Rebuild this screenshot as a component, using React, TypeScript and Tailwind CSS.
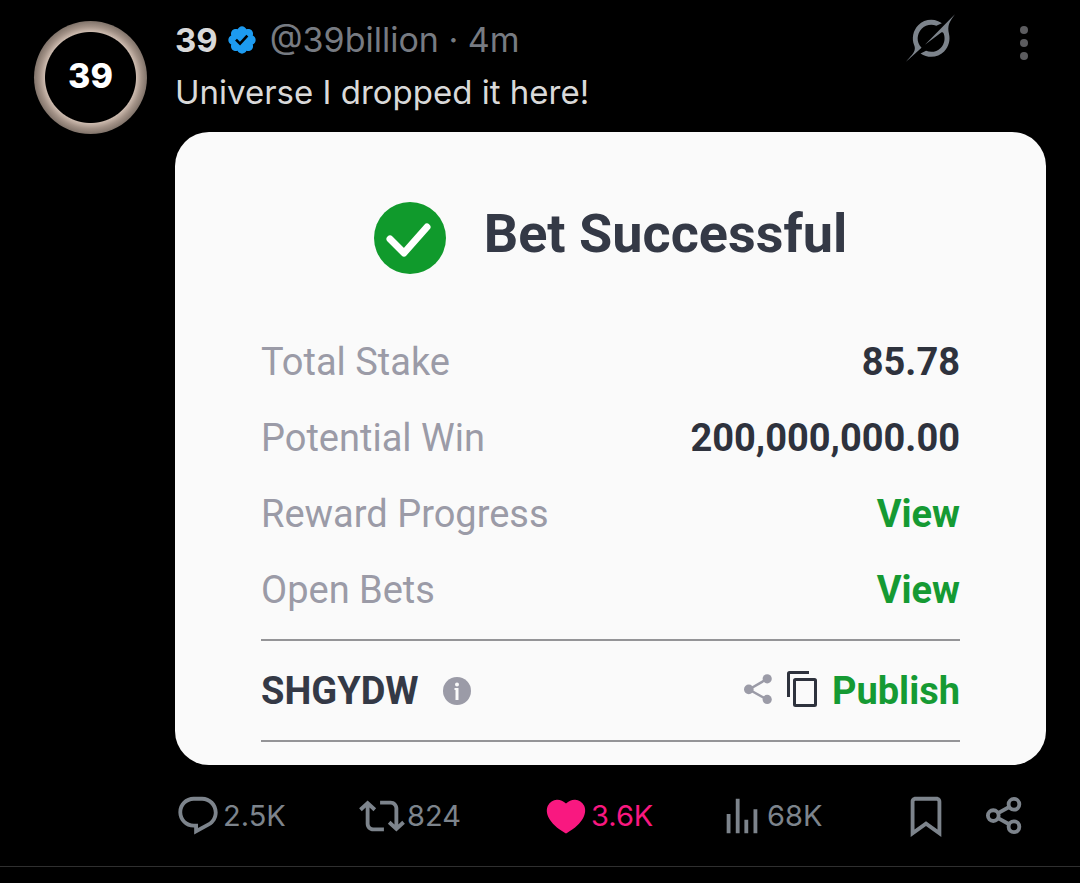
import React from 'react';

interface IconProps {
  className?: string;
}

const CommentIcon: React.FC<IconProps> = ({ className }) => (
  <svg viewBox="0 0 24 24" fill="currentColor" className={className} aria-hidden="true">
    <path d="M1.751 10c0-4.42 3.584-8 8.005-8h4.366c4.49 0 8.129 3.64 8.129 8.13 0 2.96-1.607 5.68-4.196 7.11l-8.054 4.46v-3.69h-.067c-4.49.1-8.183-3.51-8.183-8.01zm8.005-6c-3.317 0-6.005 2.69-6.005 6 0 3.37 2.77 6.08 6.138 6.01l.351-.01h1.761v2.3l5.087-2.81c1.951-1.08 3.163-3.13 3.163-5.36 0-3.39-2.744-6.13-6.129-6.13H9.756z" />
  </svg>
);

const RepostIcon: React.FC<IconProps> = ({ className }) => (
  <svg viewBox="0 0 24 24" fill="currentColor" className={className} aria-hidden="true">
    <path d="M4.5 3.88l4.432 4.14-1.364 1.46L5.5 7.55V16c0 1.1.896 2 2 2H13v2H7.5c-2.209 0-4-1.79-4-4V7.55L1.432 9.48.068 8.02 4.5 3.88zM16.5 6H11V4h5.5c2.209 0 4 1.79 4 4v8.45l2.068-1.93 1.364 1.46-4.432 4.14-4.432-4.14 1.364-1.46 2.068 1.93V8c0-1.1-.896-2-2-2z" />
  </svg>
);

const HeartIcon: React.FC<IconProps> = ({ className }) => (
  <svg viewBox="0 0 24 24" fill="currentColor" className={className} aria-hidden="true">
    <path d="M20.884 13.19c-1.351 2.48-4.001 5.12-8.379 7.67l-.503.3-.504-.3c-4.379-2.55-7.029-5.19-8.382-7.67-1.36-2.5-1.41-4.86-.514-6.67.887-1.79 2.647-2.91 4.601-3.01 1.651-.09 3.368.56 4.798 2.01 1.429-1.45 3.146-2.1 4.796-2.01 1.954.1 3.714 1.22 4.601 3.01.896 1.81.846 4.17-.514 6.67z" />
  </svg>
);

const ViewsIcon: React.FC<IconProps> = ({ className }) => (
  <svg viewBox="0 0 24 24" fill="currentColor" className={className} aria-hidden="true">
    <path d="M8.75 21V3h2v18h-2zM18 21V8.5h2V21h-2zM4 21l.004-10h2L6 21H4zm9.248 0v-7h2v7h-2z" />
  </svg>
);

const BookmarkIcon: React.FC<IconProps> = ({ className }) => (
  <svg viewBox="0 0 24 24" fill="currentColor" className={className} aria-hidden="true">
    <path d="M4 4.5C4 3.12 5.119 2 6.5 2h11C18.881 2 20 3.12 20 4.5v18.44l-8-5.71-8 5.71V4.5zM6.5 4c-.276 0-.5.22-.5.5v14.56l6-4.29 6 4.29V4.5c0-.28-.224-.5-.5-.5h-11z" />
  </svg>
);

const ShareIcon: React.FC<IconProps> = ({ className }) => (
  <svg viewBox="0 0 24 24" fill="none" stroke="currentColor" strokeWidth="2" className={className} aria-hidden="true">
    <circle cx="6.4" cy="11.8" r="2.8" />
    <circle cx="17.2" cy="5.9" r="2.8" />
    <circle cx="17.2" cy="17.6" r="2.8" />
    <path d="M8.9 10.5l5.8-3.2M8.9 13.1l5.8 3.2" />
  </svg>
);

const GrokIcon: React.FC<IconProps> = ({ className }) => (
  <svg viewBox="0 0 33 32" fill="currentColor" className={className} aria-hidden="true">
    <path d="M12.745 20.54l10.97-8.19c.539-.4 1.307-.244 1.564.38 1.349 3.288.746 7.241-1.938 9.955-2.683 2.714-6.417 3.31-9.83 1.954l-3.728 1.745c5.347 3.697 11.84 2.782 15.898-1.324 3.219-3.255 4.216-7.692 3.284-11.693l.008.009c-1.351-5.878.332-8.227 3.782-13.031L33 0l-4.54 4.59v-.014L12.743 20.544m-2.263 1.987c-3.837-3.707-3.175-9.446.1-12.755 2.42-2.449 6.388-3.448 9.852-1.979l3.72-1.737c-.67-.49-1.53-1.017-2.515-1.387-4.455-1.854-9.789-.931-13.41 2.728-3.483 3.523-4.579 8.94-2.697 13.561 1.405 3.454-.899 5.898-3.22 8.364C1.49 30.2.666 31.074 0 32l10.478-9.466" />
  </svg>
);

const MoreIcon: React.FC<IconProps> = ({ className }) => (
  <svg viewBox="0 0 8 34" fill="currentColor" className={className} aria-hidden="true">
    <circle cx="4" cy="4" r="4" />
    <circle cx="4" cy="17" r="4" />
    <circle cx="4" cy="30" r="4" />
  </svg>
);

const VerifiedIcon: React.FC<IconProps> = ({ className }) => (
  <svg viewBox="0 0 22 22" fill="currentColor" className={className} role="img" aria-label="Verified account">
    <path d="M20.396 11c-.018-.646-.215-1.275-.57-1.816-.354-.54-.852-.972-1.438-1.246.223-.607.27-1.264.14-1.897-.131-.634-.437-1.218-.882-1.687-.47-.445-1.053-.75-1.687-.882-.633-.13-1.29-.083-1.897.14-.273-.587-.704-1.086-1.245-1.44S11.647 1.62 11 1.604c-.646.017-1.273.213-1.813.568s-.969.854-1.24 1.44c-.608-.223-1.267-.272-1.902-.14-.635.13-1.22.436-1.69.882-.445.47-.749 1.055-.878 1.688-.13.633-.08 1.29.144 1.896-.587.274-1.087.705-1.443 1.245-.356.54-.555 1.17-.574 1.817.02.647.218 1.276.574 1.817.356.54.856.972 1.443 1.245-.224.606-.274 1.263-.144 1.896.13.634.433 1.218.877 1.688.47.443 1.054.747 1.687.878.633.132 1.29.084 1.897-.136.274.586.705 1.084 1.246 1.439.54.354 1.17.551 1.816.569.647-.016 1.276-.213 1.817-.567s.972-.854 1.245-1.44c.604.239 1.266.296 1.903.164.636-.132 1.22-.447 1.68-.907.46-.46.776-1.044.908-1.681s.075-1.299-.165-1.903c.586-.274 1.084-.705 1.439-1.246.354-.54.551-1.17.569-1.816zM9.662 14.85l-3.429-3.428 1.293-1.302 2.072 2.072 4.4-4.794 1.347 1.246z" />
  </svg>
);

const SuccessIcon: React.FC<IconProps> = ({ className }) => (
  <svg viewBox="0 0 72 72" className={className} aria-hidden="true">
    <circle cx="36" cy="36" r="36" fill="#109a2c" />
    <path d="M16 37l14 14 23-26" fill="none" stroke="#fff" strokeWidth="7" strokeLinecap="round" strokeLinejoin="round" />
  </svg>
);

const InfoIcon: React.FC<IconProps> = ({ className }) => (
  <svg viewBox="0 0 28 28" className={className} aria-hidden="true">
    <circle cx="14" cy="14" r="14" fill="#9b9ba7" />
    <circle cx="14" cy="7.5" r="2" fill="#fafafa" />
    <path d="M11.5 11h4v12h-3V13h-1z" fill="#fafafa" />
  </svg>
);

const ShareNodesIcon: React.FC<IconProps> = ({ className }) => (
  <svg viewBox="0 0 28 30" className={className} aria-hidden="true">
    <path d="M23 5L5 15.5l18 10" fill="none" stroke="currentColor" strokeWidth="2.4" />
    <g fill="currentColor">
      <circle cx="23.2" cy="4.8" r="4.6" />
      <circle cx="4.8" cy="15.4" r="4.8" />
      <circle cx="23.2" cy="25.4" r="4.6" />
    </g>
  </svg>
);

const CopyIcon: React.FC<IconProps> = ({ className }) => (
  <svg viewBox="0 0 30 36" fill="none" stroke="currentColor" strokeWidth="3" className={className} aria-hidden="true">
    <path d="M1.5 26V2.5q0-1 1-1H22" />
    <rect x="7.5" y="8.5" width="21" height="26" rx="1" />
  </svg>
);

interface DetailRow {
  label: string;
  value: string;
  isLink?: boolean;
}

const details: DetailRow[] = [
  { label: 'Total Stake', value: '85.78' },
  { label: 'Potential Win', value: '200,000,000.00' },
  { label: 'Reward Progress', value: 'View', isLink: true },
  { label: 'Open Bets', value: 'View', isLink: true },
];

const BetCard = () => (
  <section className="rounded-[34px] bg-[#fafafa] px-[86px] pt-[70px] pb-[23px] font-[Roboto,sans-serif] text-[38px] leading-[76px]">
    <div className="flex justify-center gap-[38px]">
      <SuccessIcon className="size-[72px]" />
      <h2 className="text-[54px] leading-[64px] font-bold text-[#343946]">Bet Successful</h2>
    </div>
    <dl className="mt-[50px] mb-[11px]">
      {details.map(row => (
        <div key={row.label} className="flex justify-between">
          <dt className="text-[#9b9ba7]">{row.label}</dt>
          <dd className="font-bold text-[#2e323d]">
            {row.isLink ? <a href="#" className="text-[#159a33]">{row.value}</a> : row.value}
          </dd>
        </div>
      ))}
    </dl>
    <div className="flex h-[103px] items-center justify-between border-y-2 border-[#949497] font-bold">
      <div className="flex items-center gap-6">
        <span className="text-[#343946]">SHGYDW</span>
        <button aria-label="Booking code info">
          <InfoIcon className="size-7" />
        </button>
      </div>
      <div className="flex items-center gap-[15px]">
        <button aria-label="Share bet" className="pb-1 text-[#9b9ba7]">
          <ShareNodesIcon className="h-[30px] w-7" />
        </button>
        <button aria-label="Copy code" className="pb-1 text-[#2e323d]">
          <CopyIcon className="h-9 w-[30px]" />
        </button>
        <button className="text-[#159a33]">Publish</button>
      </div>
    </div>
  </section>
);

const actions = [
  { label: 'Reply', count: '2.5K', Icon: CommentIcon },
  { label: 'Repost', count: '824', Icon: RepostIcon },
  { label: 'Like', count: '3.6K', Icon: HeartIcon, active: true },
  { label: 'Views', count: '68K', Icon: ViewsIcon },
  { label: 'Bookmark', Icon: BookmarkIcon },
  { label: 'Share', Icon: ShareIcon },
];

const App = () => {
  return (
    <main className="min-h-screen bg-black font-[Inter,sans-serif] text-[33px] leading-[52px] text-[#d9d9d9]">
      <article className="flex gap-7 border-b border-[#2f2f2f] px-[34px] pt-[14px] pb-[27px]">
        <div className="mt-[7px] flex size-[113px] shrink-0 items-center justify-center rounded-full bg-[radial-gradient(circle,#000_45px,#cbb9ad_46px,#a39287_51px,#7d7067_57px)] pb-1 text-[34px] font-extrabold text-white">
          39
        </div>

        <div className="min-w-0 flex-1">
          <header className="flex items-start">
            <span className="font-bold">39</span>
            <VerifiedIcon className="mt-[10px] ml-2 size-8 text-[#1d9bf0]" />
            <span className="ml-3 text-[34px] text-[#777b82]">@39billion · 4m</span>
            <button aria-label="Explain this post" className="ml-auto text-[#7d848c]">
              <GrokIcon className="h-12 w-[49px]" />
            </button>
            <button aria-label="More" className="mt-3 mr-[18px] ml-[65px] text-[#5c5c5f]">
              <MoreIcon className="h-[34px] w-2" />
            </button>
          </header>
          <p className="mb-[14px]">Universe I dropped it here!</p>

          <BetCard />

          <div className="mt-7 grid grid-cols-[184fr_184fr_176fr_184fr_78fr_65fr] text-[29px] leading-[46px] text-[#7d848c]">
            {actions.map(({ label, count, Icon, active }) => (
              <button
                key={label}
                aria-label={count ? undefined : label}
                title={label}
                className={active ? 'flex items-center gap-0.5 text-[#f91880]' : 'flex items-center gap-0.5'}
              >
                <Icon className="size-[46px] shrink-0" />
                {count}
              </button>
            ))}
          </div>
        </div>
      </article>
    </main>
  );
};

export default App;
